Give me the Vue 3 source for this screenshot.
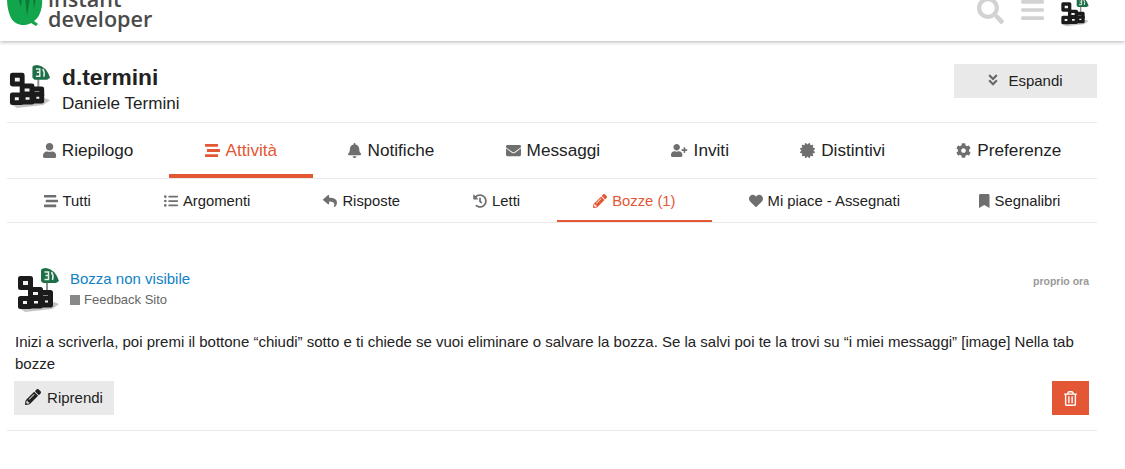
<script setup>
const mainTabs = [
  { label: "Riepilogo", icon: "user" },
  { label: "Attività", icon: "stream", active: true },
  { label: "Notifiche", icon: "bell" },
  { label: "Messaggi", icon: "envelope" },
  { label: "Inviti", icon: "userPlus" },
  { label: "Distintivi", icon: "certificate" },
  { label: "Preferenze", icon: "cog" },
];

const subTabs = [
  { label: "Tutti", icon: "stream" },
  { label: "Argomenti", icon: "list" },
  { label: "Risposte", icon: "reply" },
  { label: "Letti", icon: "history" },
  { label: "Bozze (1)", icon: "pencil", active: true },
  { label: "Mi piace - Assegnati", icon: "heart" },
  { label: "Segnalibri", icon: "bookmark" },
];

const icons = {
  user: { w: 448, d: "M224 256c70.7 0 128-57.3 128-128S294.7 0 224 0 96 57.3 96 128s57.3 128 128 128zm89.6 32h-16.7c-22.2 10.2-46.9 16-72.9 16s-50.6-5.8-72.9-16h-16.7C60.2 288 0 348.2 0 422.4V464c0 26.5 21.5 48 48 48h352c26.5 0 48-21.5 48-48v-41.6c0-74.2-60.2-134.4-134.4-134.4z" },
  stream: { w: 512, d: "M16 128h416c8.84 0 16-7.16 16-16V48c0-8.84-7.16-16-16-16H16C7.16 32 0 39.16 0 48v64c0 8.84 7.16 16 16 16zm480 80H80c-8.84 0-16 7.16-16 16v64c0 8.84 7.16 16 16 16h416c8.84 0 16-7.16 16-16v-64c0-8.84-7.16-16-16-16zm-64 176H16c-8.84 0-16 7.16-16 16v64c0 8.84 7.16 16 16 16h416c8.84 0 16-7.16 16-16v-64c0-8.84-7.16-16-16-16z" },
  bell: { w: 448, d: "M224 512c35.32 0 63.97-28.65 63.97-64H160.03c0 35.35 28.65 64 63.97 64zm215.39-149.71c-19.32-20.76-55.47-51.99-55.47-154.29 0-77.7-54.48-139.9-127.94-155.16V32c0-17.67-14.32-32-31.98-32s-31.98 14.33-31.98 32v20.84C118.56 68.1 64.08 130.3 64.08 208c0 102.3-36.15 133.53-55.47 154.29-6 6.45-8.66 14.16-8.61 21.71.11 16.4 12.98 32 32.1 32h383.8c19.12 0 32-15.6 32.1-32 .05-7.55-2.61-15.27-8.61-21.71z" },
  envelope: { w: 512, d: "M502.3 190.8c3.9-3.1 9.7-.2 9.7 4.7V400c0 26.5-21.5 48-48 48H48c-26.5 0-48-21.5-48-48V195.6c0-5 5.7-7.8 9.7-4.7 22.4 17.4 52.1 39.5 154.1 113.6 21.1 15.4 56.7 47.8 92.2 47.6 35.7.3 72-32.8 92.3-47.6 102-74.1 131.6-96.3 154-113.7zM256 320c23.2.4 56.6-29.2 73.4-41.4 132.7-96.3 142.8-104.7 173.4-128.7 5.8-4.5 9.2-11.5 9.2-18.9v-19c0-26.5-21.5-48-48-48H48C21.5 64 0 85.5 0 112v19c0 7.4 3.4 14.3 9.2 18.9 30.6 23.9 40.7 32.4 173.4 128.7 16.8 12.2 50.2 41.8 73.4 41.4z" },
  userPlus: { w: 640, d: "M624 208h-64v-64c0-8.8-7.2-16-16-16h-32c-8.8 0-16 7.2-16 16v64h-64c-8.8 0-16 7.2-16 16v32c0 8.8 7.2 16 16 16h64v64c0 8.8 7.2 16 16 16h32c8.8 0 16-7.2 16-16v-64h64c8.8 0 16-7.2 16-16v-32c0-8.8-7.2-16-16-16zm-400 48c70.7 0 128-57.3 128-128S294.7 0 224 0 96 57.3 96 128s57.3 128 128 128zm89.6 32h-16.7c-22.2 10.2-46.9 16-72.9 16s-50.6-5.8-72.9-16h-16.7C60.2 288 0 348.2 0 422.4V464c0 26.5 21.5 48 48 48h352c26.5 0 48-21.5 48-48v-41.6c0-74.2-60.2-134.4-134.4-134.4z" },
  certificate: { w: 512, d: "M458.622 255.92l45.985-45.005c13.708-12.977 7.316-36.039-10.664-40.339l-62.65-15.99 17.661-62.015c4.991-17.838-11.829-34.663-29.661-29.671l-61.994 17.667-15.984-62.671C337.085.197 313.765-6.276 300.99 7.228L256 53.57 211.011 7.229c-12.63-13.351-36.047-7.234-40.325 10.668l-15.984 62.671-61.995-17.667C74.87 57.907 58.056 74.738 63.046 92.572l17.661 62.015-62.65 15.99C.069 174.878-6.31 197.944 7.392 210.915l45.985 45.005-45.985 45.004c-13.708 12.977-7.316 36.039 10.664 40.339l62.65 15.99-17.661 62.015c-4.991 17.838 11.829 34.663 29.661 29.671l61.994-17.667 15.984 62.671c4.439 18.575 27.696 24.018 40.325 10.668L256 458.61l44.989 46.001c12.5 13.488 35.987 7.486 40.325-10.668l15.984-62.671 61.994 17.667c17.836 4.994 34.651-11.837 29.661-29.671l-17.661-62.015 62.65-15.99c17.987-4.302 24.366-27.367 10.664-40.339l-45.984-45.004z" },
  cog: { w: 512, d: "M487.4 315.7l-42.6-24.6c4.3-23.2 4.3-47 0-70.2l42.6-24.6c4.9-2.8 7.1-8.6 5.5-14-11.1-35.6-30-67.8-54.7-94.6-3.8-4.1-10-5.1-14.8-2.3L380.8 110c-17.9-15.4-38.5-27.3-60.8-35.1V25.8c0-5.6-3.9-10.5-9.4-11.7-36.7-8.2-74.3-7.8-109.2 0-5.5 1.2-9.4 6.1-9.4 11.7V75c-22.2 7.9-42.8 19.8-60.8 35.1L88.7 85.5c-4.9-2.8-11-1.9-14.8 2.3-24.7 26.7-43.6 58.9-54.7 94.6-1.7 5.4.6 11.2 5.5 14L67.3 221c-4.3 23.2-4.3 47 0 70.2l-42.6 24.6c-4.9 2.8-7.1 8.6-5.5 14 11.1 35.6 30 67.8 54.7 94.6 3.8 4.1 10 5.1 14.8 2.3l42.6-24.6c17.9 15.4 38.5 27.3 60.8 35.1v49.2c0 5.6 3.9 10.5 9.4 11.7 36.7 8.2 74.3 7.8 109.2 0 5.5-1.2 9.4-6.1 9.4-11.7v-49.2c22.2-7.9 42.8-19.8 60.8-35.1l42.6 24.6c4.9 2.8 11 1.9 14.8-2.3 24.7-26.7 43.6-58.9 54.7-94.6 1.5-5.5-.7-11.3-5.6-14.1zM256 336c-44.1 0-80-35.9-80-80s35.9-80 80-80 80 35.9 80 80-35.9 80-80 80z" },
  list: { w: 512, d: "M48 48a48 48 0 1 0 48 48 48 48 0 0 0-48-48zm0 160a48 48 0 1 0 48 48 48 48 0 0 0-48-48zm0 160a48 48 0 1 0 48 48 48 48 0 0 0-48-48zm448 16H176a16 16 0 0 0-16 16v32a16 16 0 0 0 16 16h320a16 16 0 0 0 16-16v-32a16 16 0 0 0-16-16zm0-320H176a16 16 0 0 0-16 16v32a16 16 0 0 0 16 16h320a16 16 0 0 0 16-16V80a16 16 0 0 0-16-16zm0 160H176a16 16 0 0 0-16 16v32a16 16 0 0 0 16 16h320a16 16 0 0 0 16-16v-32a16 16 0 0 0-16-16z" },
  reply: { w: 512, d: "M8.309 189.836L184.313 37.851C199.719 24.546 224 35.347 224 56.015v80.053c160.629 1.839 288 34.032 288 186.258 0 61.441-39.581 122.309-83.333 154.132-13.653 9.931-33.111-2.533-28.077-18.631 45.344-145.012-21.507-183.51-176.59-185.742V360c0 20.7-24.3 31.453-39.687 18.164l-176.004-152c-11.071-9.562-11.086-26.753 0-36.328z" },
  history: { w: 512, d: "M504 255.531c.253 136.64-111.18 248.372-247.82 248.468-59.015.042-113.223-20.53-155.822-54.911-11.077-8.94-11.905-25.541-1.839-35.607l11.267-11.267c8.609-8.609 22.353-9.551 31.891-1.984C173.062 425.135 212.781 440 256 440c101.705 0 184-82.311 184-184 0-101.705-82.311-184-184-184-48.814 0-93.149 18.969-126.068 49.932l50.754 50.754c10.08 10.08 2.941 27.314-11.313 27.314H24c-8.837 0-16-7.163-16-16V38.627c0-14.254 17.234-21.393 27.314-11.314l49.372 49.372C129.209 34.136 189.552 8 256 8c136.81 0 247.747 110.78 248 247.531zm-180.912 78.784l9.823-12.63c8.138-10.463 6.253-25.542-4.21-33.679L288 256.349V152c0-13.255-10.745-24-24-24h-16c-13.255 0-24 10.745-24 24v135.651l65.409 50.874c10.463 8.137 25.541 6.253 33.679-4.21z" },
  pencil: { w: 512, d: "M497.9 142.1l-46.1 46.1c-4.7 4.7-12.3 4.7-17 0l-111-111c-4.7-4.7-4.7-12.3 0-17l46.1-46.1c18.7-18.7 49.1-18.7 67.9 0l60.1 60.1c18.8 18.7 18.8 49.1 0 67.9zM284.2 99.8L21.6 362.4.4 483.9c-2.9 16.4 11.4 30.6 27.8 27.8l121.5-21.3 262.6-262.6c4.7-4.7 4.7-12.3 0-17l-111-111c-4.8-4.7-12.4-4.7-17.1 0zM124.1 339.9c-5.5-5.5-5.5-14.3 0-19.8l154-154c5.5-5.5 14.3-5.5 19.8 0s5.5 14.3 0 19.8l-154 154c-5.5 5.5-14.3 5.5-19.8 0zM88 424h48v36.3l-64.5 11.3-31.1-31.1L51.7 376H88v48z" },
  heart: { w: 512, d: "M462.3 62.6C407.5 15.9 326 24.3 275.7 76.2L256 96.5l-19.7-20.3C186.1 24.3 104.5 15.9 49.7 62.6c-62.8 53.6-66.1 149.8-9.9 207.9l193.5 199.8c12.5 12.9 32.8 12.9 45.3 0l193.5-199.8c56.3-58.1 53-154.3-9.8-207.9z" },
  bookmark: { w: 384, d: "M0 512V48C0 21.49 21.49 0 48 0h288c26.51 0 48 21.49 48 48v464L192 400 0 512z" },
  search: { w: 512, d: "M505 442.7L405.3 343c-4.5-4.5-10.6-7-17-7H372c27.6-35.3 44-79.7 44-128C416 93.1 322.9 0 208 0S0 93.1 0 208s93.1 208 208 208c48.3 0 92.7-16.4 128-44v16.3c0 6.4 2.5 12.5 7 17l99.7 99.7c9.4 9.4 24.6 9.4 33.9 0l28.3-28.3c9.4-9.4 9.4-24.6.1-34zM208 336c-70.7 0-128-57.2-128-128 0-70.7 57.2-128 128-128 70.7 0 128 57.2 128 128 0 70.7-57.2 128-128 128z" },
  bars: { w: 448, d: "M16 132h416c8.837 0 16-7.163 16-16V76c0-8.837-7.163-16-16-16H16C7.163 60 0 67.163 0 76v40c0 8.837 7.163 16 16 16zm0 160h416c8.837 0 16-7.163 16-16v-40c0-8.837-7.163-16-16-16H16c-8.837 0-16 7.163-16 16v40c0 8.837 7.163 16 16 16zm0 160h416c8.837 0 16-7.163 16-16v-40c0-8.837-7.163-16-16-16H16c-8.837 0-16 7.163-16 16v40c0 8.837 7.163 16 16 16z" },
  angles: { w: 320, d: "M143 256.3L7 120.3c-9.4-9.4-9.4-24.6 0-33.9l22.6-22.6c9.4-9.4 24.6-9.4 33.9 0l96.4 96.4 96.4-96.4c9.4-9.4 24.6-9.4 33.9 0L313 86.3c9.4 9.4 9.4 24.6 0 33.9l-136 136c-9.4 9.5-24.6 9.5-34 .1zm34 192l136-136c9.4-9.4 9.4-24.6 0-33.9l-22.6-22.6c-9.4-9.4-24.6-9.4-33.9 0L160 352.1l-96.4-96.4c-9.4-9.4-24.6-9.4-33.9 0L7 278.3c-9.4 9.4-9.4 24.6 0 33.9l136 136c9.4 9.5 24.6 9.5 34 .1z" },
  trash: { w: 448, d: "M268 416h24a12 12 0 0 0 12-12V188a12 12 0 0 0-12-12h-24a12 12 0 0 0-12 12v216a12 12 0 0 0 12 12zM432 80h-82.41l-34-56.7A48 48 0 0 0 274.41 0H173.59a48 48 0 0 0-41.16 23.3L98.41 80H16A16 16 0 0 0 0 96v16a16 16 0 0 0 16 16h16v336a48 48 0 0 0 48 48h288a48 48 0 0 0 48-48V128h16a16 16 0 0 0 16-16V96a16 16 0 0 0-16-16zM171.84 50.91A6 6 0 0 1 177 48h94a6 6 0 0 1 5.15 2.91L293.61 80H154.39zM368 464H80V128h288zm-212-48h24a12 12 0 0 0 12-12V188a12 12 0 0 0-12-12h-24a12 12 0 0 0-12 12v216a12 12 0 0 0 12 12z" },
};
</script>

<template>
  <div class="page">
    <svg class="defs" width="0" height="0">
      <symbol id="avatar" viewBox="0 0 45 45">
        <path d="M2 39 L38 34 L43 36 L36 41 L9 44 Z" fill="#c4c4c4" />
        <rect x="30" y="13" width="2" height="13" fill="#8f8f8f" />
        <path d="M25 2 Q26 0 30 0 Q39 1 43 13 L40 15 L27 15 L25 13 Z" fill="#1e6e48" />
        <path d="M28.5 4 H32.5 V7.5 H29.5 M32.5 7.5 V11.5 H28.5 M35.5 4 Q38 8 36.5 12" fill="none" stroke="#e4efe9" stroke-width="1.5" />
        <g fill="#f2f2f2" stroke="#1b1b1b" stroke-width="5" stroke-linejoin="round">
          <rect x="4.5" y="10.5" width="10" height="9" />
          <rect x="24.5" y="24.5" width="10" height="7" />
          <rect x="14.5" y="21.5" width="10" height="8" />
          <rect x="4.5" y="30.5" width="9" height="8" />
          <rect x="15.5" y="30.5" width="9" height="7.5" />
          <rect x="26.5" y="30" width="8" height="7" />
        </g>
      </symbol>
    </svg>

    <header class="topbar">
      <div class="brand">
        <svg class="leaf" viewBox="0 0 36 30">
          <path d="M0 0 H35 C36 9 33 19 27 23 L31 26 L29 28 L24 25 C17 29 8 27 4 20 C1 14 0 7 0 0 Z" fill="#13a54c" />
          <path d="M11 0 H15 L14 9 Z M18 0 H23 L20 18 Z M26 0 H29 L27 11 Z" fill="#0c7a38" />
        </svg>
        <div class="brand-name">
          <span>instant</span>
          <span>developer</span>
        </div>
      </div>
      <div class="top-actions">
        <svg class="top-icon search" :viewBox="`0 0 ${icons.search.w} 512`"><path :d="icons.search.d" /></svg>
        <svg class="top-icon bars" :viewBox="`0 0 ${icons.bars.w} 512`"><path :d="icons.bars.d" /></svg>
        <svg class="top-avatar"><use href="#avatar" /></svg>
      </div>
    </header>

    <main class="content">
      <section class="profile">
        <svg class="profile-avatar"><use href="#avatar" /></svg>
        <div class="names">
          <h1>d.termini</h1>
          <p>Daniele Termini</p>
        </div>
        <button class="expand">
          <svg class="icon" :viewBox="`0 0 ${icons.angles.w} 512`"><path :d="icons.angles.d" /></svg>
          Espandi
        </button>
      </section>

      <nav class="tabs main-tabs">
        <a v-for="tab in mainTabs" :key="tab.label" class="tab" :class="[tab.icon, { active: tab.active }]">
          <svg class="icon" :viewBox="`0 0 ${icons[tab.icon].w} 512`"><path :d="icons[tab.icon].d" /></svg>
          {{ tab.label }}
        </a>
      </nav>

      <nav class="tabs sub-tabs">
        <a v-for="tab in subTabs" :key="tab.label" class="tab" :class="{ active: tab.active }">
          <svg class="icon" :viewBox="`0 0 ${icons[tab.icon].w} 512`"><path :d="icons[tab.icon].d" /></svg>
          {{ tab.label }}
        </a>
      </nav>

      <article class="draft">
        <div class="draft-head">
          <svg class="draft-avatar"><use href="#avatar" /></svg>
          <div class="draft-title">
            <a class="title-link">Bozza non visibile</a>
            <span class="category"><i class="badge"></i>Feedback Sito</span>
          </div>
          <span class="time">proprio ora</span>
        </div>
        <p class="excerpt">Inizi a scriverla, poi premi il bottone “chiudi” sotto e ti chiede se vuoi eliminare o salvare la bozza. Se la salvi poi te la trovi su “i miei messaggi” [image] Nella tab bozze</p>
        <div class="draft-actions">
          <button class="resume">
            <svg class="icon" viewBox="0 0 512 512"><path :d="icons.pencil.d" /></svg>
            Riprendi
          </button>
          <button class="delete">
            <svg class="icon" viewBox="0 0 448 512"><path :d="icons.trash.d" /></svg>
          </button>
        </div>
      </article>
    </main>
  </div>
</template>

<style>
html,
body {
  background: #fff;
  overflow: hidden;
}
</style>

<style scoped>
.page {
  width: 1125px;
  height: 469px;
  overflow: hidden;
  font-family: "Liberation Sans", Arial, sans-serif;
  color: #222;
}
.defs {
  position: absolute;
}
.topbar {
  height: 41px;
  display: flex;
  justify-content: space-between;
  align-items: flex-start;
  padding: 0 35px 0 7px;
  box-shadow: 0 1px 4px rgba(0, 0, 0, 0.3);
  overflow: hidden;
  position: relative;
}
.brand {
  display: flex;
  gap: 5px;
  align-items: flex-start;
}
.leaf {
  width: 36px;
  height: 30px;
  margin-top: -2px;
}
.brand-name {
  display: flex;
  flex-direction: column;
  font-family: "Open Sans", sans-serif;
  font-weight: 600;
  font-size: 21.6px;
  line-height: 20px;
  color: #4a4a4a;
  margin-top: -11px;
}
.top-actions {
  display: flex;
  align-items: flex-start;
}
.top-icon {
  fill: #d2d2d2;
  display: block;
}
.search {
  width: 27px;
  height: 27px;
  margin-top: -3px;
}
.bars {
  width: 23px;
  height: 26px;
  margin-left: 17px;
  margin-top: -3px;
}
.top-avatar {
  width: 30px;
  height: 30px;
  margin-left: 16px;
  margin-top: -3px;
}
.content {
  width: 1090px;
  margin-left: 7px;
}
.profile {
  display: flex;
  align-items: flex-start;
  height: 82px;
  padding-top: 23px;
  box-sizing: border-box;
  border-bottom: 1px solid #e9e9e9;
}
.profile-avatar {
  width: 44px;
  height: 44px;
  margin: 1px 10px 0 1px;
}
.names {
  flex: 1;
}
h1 {
  margin: 0;
  font-size: 22.8px;
  line-height: 26px;
  font-weight: 700;
  color: #222;
}
.names p {
  margin: 4px 0 0;
  font-size: 17.1px;
  line-height: 20px;
}
.expand {
  width: 143px;
  height: 34px;
  padding: 0 0 2px;
  border: 0;
  background: #e9e9e9;
  font: 15px "Liberation Sans", Arial, sans-serif;
  color: #222;
  display: flex;
  align-items: center;
  justify-content: center;
  gap: 10px;
}
.expand .icon {
  width: 10px;
  height: 14px;
  fill: #666;
}
.tabs {
  display: flex;
  border-bottom: 1px solid #e9e9e9;
}
.tab {
  flex: 1 1 auto;
  display: flex;
  align-items: center;
  justify-content: center;
  box-sizing: border-box;
  white-space: nowrap;
  color: #222;
}
.icon {
  fill: #6f6f6f;
  display: block;
}
.main-tabs .tab {
  height: 55px;
  font-size: 17.2px;
  gap: 6px;
  padding-top: 4px;
  border-bottom: 4px solid transparent;
}
.main-tabs .icon {
  height: 15px;
}
.main-tabs .userPlus .icon {
  height: 13px;
}
.sub-tabs .tab {
  height: 43px;
  font-size: 14.8px;
  gap: 5px;
  padding-top: 2px;
  border-bottom: 2px solid transparent;
}
.sub-tabs .tab:last-child {
  padding-left: 6px;
}
.sub-tabs .icon {
  height: 14px;
}
.tab.active {
  color: #e45735;
  border-bottom-color: #e45735;
}
.tab.active .icon {
  fill: #e45735;
}
.draft {
  padding: 45px 8px 15px;
  border-bottom: 1px solid #e9e9e9;
}
.draft-head {
  display: flex;
  align-items: flex-start;
}
.draft-avatar {
  width: 45px;
  height: 45px;
  margin: 0 9px 0 1px;
}
.draft-title {
  flex: 1;
  display: flex;
  flex-direction: column;
  gap: 4px;
  margin-top: 2px;
}
.title-link {
  color: #0f82c6;
  font-size: 15px;
  line-height: 18px;
}
.category {
  display: flex;
  align-items: center;
  font-size: 13px;
  line-height: 16px;
  color: #666;
}
.badge {
  width: 10px;
  height: 10px;
  background: #888;
  margin-right: 4px;
}
.time {
  color: #999;
  font-size: 10.5px;
  font-weight: 700;
  margin-top: 7px;
}
.excerpt {
  margin: 18px 0 0;
  font-size: 15px;
  line-height: 22px;
  color: #222;
}
.draft-actions {
  display: flex;
  justify-content: space-between;
  margin-top: 6px;
}
.resume {
  width: 100px;
  height: 34px;
  padding: 0 0 2px;
  margin-left: -1px;
  border: 0;
  background: #e9e9e9;
  font: 15px "Liberation Sans", Arial, sans-serif;
  color: #222;
  display: flex;
  align-items: center;
  justify-content: center;
  gap: 6px;
}
.resume .icon {
  width: 16px;
  height: 16px;
  fill: #222;
}
.delete {
  width: 37px;
  height: 34px;
  border: 0;
  background: #e45735;
  display: flex;
  align-items: center;
  justify-content: center;
}
.delete .icon {
  width: 13px;
  height: 15px;
  fill: #fff;
}
</style>
